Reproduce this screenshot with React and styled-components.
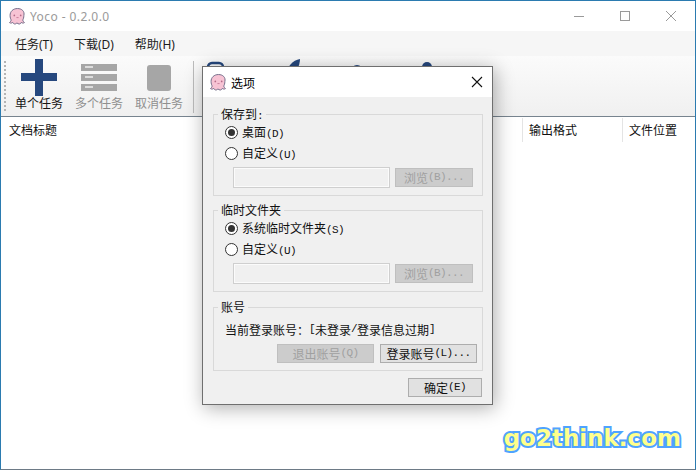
import React from "react";
import styled, { createGlobalStyle } from "styled-components";

const GlobalStyle = createGlobalStyle`
  html, body {
    margin: 0;
    padding: 0;
    background: #fff;
  }
  * {
    box-sizing: border-box;
  }
`;

const uiFont = `"Noto Sans", "Noto Sans CJK SC", sans-serif`;
const cjkFont = `"Noto Sans CJK SC", sans-serif`;

const AppWindow = styled.div`
  position: relative;
  width: 696px;
  height: 470px;
  overflow: hidden;
  display: flex;
  flex-direction: column;
  background: #fff;
  border: 1px solid #2b7bb0;
  border-bottom-color: #6d7a86;
  font-family: ${cjkFont};
  font-size: 12px;
  color: #111;
`;

const TitleBar = styled.div`
  height: 30px;
  flex: none;
  display: flex;
  align-items: center;
  padding-left: 8px;
  background: #fff;
`;

const TitleText = styled.span`
  margin-left: 4px;
  font-family: ${uiFont};
  font-size: 12px;
  letter-spacing: 0.42px;
  color: #9a9a9a;
`;

const WinButtons = styled.div`
  margin-left: auto;
  display: flex;
  height: 100%;
`;

const WinButton = styled.div`
  width: 46px;
  height: 100%;
  display: flex;
  align-items: center;
  justify-content: center;
  padding-right: 2px;
`;

const MenuBar = styled.div`
  height: 25px;
  flex: none;
  display: flex;
  align-items: center;
  gap: 21px;
  padding-left: 14px;
  background: #f6f6f6;
  font-family: ${uiFont};
  font-size: 12px;
  color: #1c1c1c;
`;

const Toolbar = styled.div`
  height: 60px;
  flex: none;
  display: flex;
  padding: 3px 0 0 3px;
  background: linear-gradient(#fbfbfb, #f0f0f0);
`;

const Grip = styled.div`
  width: 2px;
  height: 52px;
  margin-top: 2px;
  margin-right: 3px;
  background: repeating-linear-gradient(#b4b4b4 0 2px, transparent 2px 4px);
`;

const ToolButton = styled.div`
  width: ${(p) => p.$width || 60}px;
  display: flex;
  flex-direction: column;
  align-items: center;
  font-size: 12px;
  line-height: 14px;
  color: ${(p) => (p.$disabled ? "#8f8f8f" : "#151515")};
`;

const ToolIcon = styled.div`
  height: 37px;
  display: flex;
  align-items: center;
  justify-content: center;
`;

const ToolSeparator = styled.div`
  width: 1px;
  height: 52px;
  margin: 2px 7px 0 4px;
  background: #bcbcbc;
`;

const Table = styled.div`
  flex: 1;
  background: #fff;
  border-top: 1px solid #77848f;
`;

const HeaderRow = styled.div`
  height: 26px;
  display: flex;
  align-items: center;
`;

const HeaderCell = styled.div`
  height: 24px;
  display: flex;
  align-items: center;
  width: ${(p) => p.$width}px;
  padding-left: ${(p) => (p.$first ? 8 : 6)}px;
  padding-bottom: 2px;
  border-left: ${(p) => (p.$first ? "none" : "1px solid #e4e4e4")};
`;

const Dialog = styled.div`
  position: absolute;
  left: 201px;
  top: 65px;
  width: 291px;
  height: 339px;
  display: flex;
  flex-direction: column;
  background: #f0f0f0;
  border: 1px solid #6f6f6f;
  box-shadow: 2px 3px 18px rgba(0, 0, 0, 0.32);
`;

const DialogTitle = styled.div`
  height: 30px;
  flex: none;
  display: flex;
  align-items: center;
  padding: 0 9px 0 7px;
  background: #fff;
  font-size: 12px;
  color: #000;
`;

const DialogName = styled.span`
  margin-left: 4px;
`;

const CloseBox = styled.div`
  margin-left: auto;
  display: flex;
`;

const DialogBody = styled.div`
  flex: 1;
  display: flex;
  flex-direction: column;
  padding: 10px 9px 0 10px;
`;

const Group = styled.fieldset`
  margin: 0 0 ${(p) => p.$gap || 0}px;
  padding: 1px 9px 0 11px;
  height: ${(p) => p.$height}px;
  border: 1px solid #d9d9d9;
  min-width: 0;
`;

const GroupLegend = styled.legend`
  margin-left: -7px;
  padding: 0 3px;
  height: 14px;
  font-size: 12px;
  line-height: 14px;
  color: #111;
`;

const RadioRow = styled.label`
  display: flex;
  align-items: center;
  height: 21px;
  gap: 4px;
  font-size: 12px;
  line-height: 14px;
  color: #111;
`;

const RadioMark = styled.span`
  width: 13px;
  height: 13px;
  flex: none;
  display: flex;
  align-items: center;
  justify-content: center;
  border-radius: 50%;
  background: #fff;
  border: 1px solid #333;

  &::after {
    content: "";
    display: ${(p) => (p.$checked ? "block" : "none")};
    width: 7px;
    height: 7px;
    border-radius: 50%;
    background: #333;
  }
`;

const Key = styled.span`
  font-family: "Liberation Mono", monospace;
  font-size: 11px;
  line-height: 1;
  letter-spacing: -0.6px;
`;

const PathRow = styled.div`
  display: flex;
  align-items: center;
  gap: 5px;
  margin: 3px 0 0 8px;
`;

const PathInput = styled.div`
  width: 157px;
  height: 21px;
  background: #f0f0f0;
  border: 1px solid #cfcfcf;
  box-shadow: inset 0 0 0 1px #fbfbfb;
`;

const PushButton = styled.div`
  width: ${(p) => p.$width}px;
  height: 19px;
  display: flex;
  align-items: center;
  justify-content: center;
  font-size: 12px;
  white-space: nowrap;
  background: ${(p) => (p.$disabled ? "#cccccc" : "#e1e1e1")};
  border: 1px solid ${(p) => (p.$disabled ? "#bfbfbf" : "#adadad")};
  color: ${(p) => (p.$disabled ? "#a0a0a0" : "#111")};
`;

const AccountLine = styled.div`
  height: 14px;
  margin-top: 7px;
  display: flex;
  align-items: center;
  font-size: 12px;
  color: #111;
  white-space: nowrap;
`;

const AccountButtons = styled.div`
  display: flex;
  justify-content: flex-end;
  gap: 6px;
  margin: 8px -4px 0 0;
`;

const DialogFooter = styled.div`
  display: flex;
  justify-content: flex-end;
  margin: 7px 1px 0 0;
`;

const Watermark = styled.div`
  position: absolute;
  right: 14px;
  bottom: 16px;
  font-family: "DejaVu Sans", sans-serif;
  font-weight: 700;
  font-size: 23px;
  line-height: 30px;
  color: #ffff8c;
  -webkit-text-stroke: 4px #4fa3ff;
  paint-order: stroke fill;
`;

const Octopus = () => (
  <svg width="17" height="17" viewBox="1 0.5 16 16">
    <path
      d="M9 1C4.8 1 2 3.8 2 7.500c0 2 .6 3.400 1.100 4.400-.4 1.100-1 1.800-1.600 2.400.9.600 2.200.500 3-.2.500 1 1.500 1.700 2.500 1.400.6-.2.900-.5 1.500-1 .6.500 1.200 1.200 2.200 1.100 1-.1 1.400-.7 1.800-1.500.8.700 2.200.800 3 .2-.6-.6-1.200-1.300-1.600-2.400.5-1 1.100-2.400 1.100-4.400C15.900 3.800 13.200 1 9 1z"
      fill="#f7c3d4"
      stroke="#6f6a86"
      strokeWidth="0.9"
    />
    <circle cx="6" cy="7.500" r="0.800" fill="#b56a88" />
    <circle cx="12" cy="7.500" r="0.800" fill="#b56a88" />
    <path d="M8 9.500h2" stroke="#c97f9c" strokeWidth="0.9" />
  </svg>
);

const PlusIcon = () => (
  <svg width="36" height="37" viewBox="0 0 36 37">
    <path d="M14 0h8v14h14v8H22v15h-8V22H0v-8h14z" fill="#26487e" />
  </svg>
);

const ListIcon = () => (
  <svg width="36" height="28" viewBox="0 0 36 28">
    {[0, 10, 20].map((y) => (
      <g key={y}>
        <rect y={y} width="36" height="7" fill="#a6a6a6" />
        <rect x="4" y={y + 2} width="8" height="2" fill="#dcdcdc" />
      </g>
    ))}
  </svg>
);

const StopIcon = () => (
  <svg width="24" height="26" viewBox="0 0 24 26">
    <rect width="24" height="26" rx="3" fill="#a6a6a6" />
  </svg>
);

const BoxIcon = () => (
  <svg width="40" height="37" viewBox="0 0 40 37">
    <rect x="7" y="4" width="15" height="30" rx="4" fill="none" stroke="#26487e" strokeWidth="2.500" />
  </svg>
);

const FeatherIcon = () => (
  <svg width="40" height="37" viewBox="0 0 40 37">
    <path d="M24 0c-7 1-14 8-15 18l5 1C20 14 24 7 24 0z" fill="#26487e" />
  </svg>
);

const DotIcon = ({ x, y, r }) => (
  <svg width="40" height="37" viewBox="0 0 40 37">
    <circle cx={x} cy={y} r={r} fill="#26487e" />
  </svg>
);

const Radio = ({ checked, children }) => (
  <RadioRow>
    <RadioMark $checked={checked} />
    <span>{children}</span>
  </RadioRow>
);

const FolderGroup = ({ title, height, mainLabel, gap }) => (
  <Group $height={height} $gap={gap}>
    <GroupLegend>{title}</GroupLegend>
    <Radio checked>{mainLabel}</Radio>
    <Radio>
      自定义<Key>(U)</Key>
    </Radio>
    <PathRow>
      <PathInput />
      <PushButton $disabled $width={78}>
        浏览<Key>(B)...</Key>
      </PushButton>
    </PathRow>
  </Group>
);

const App = () => (
  <>
    <GlobalStyle />
    <AppWindow>
      <TitleBar>
        <Octopus />
        <TitleText>Yoco - 0.2.0.0</TitleText>
        <WinButtons>
          <WinButton>
            <svg width="10" height="10" viewBox="0 0 10 10">
              <path d="M0 5.500h10" stroke="#9a9a9a" />
            </svg>
          </WinButton>
          <WinButton>
            <svg width="10" height="10" viewBox="0 0 10 10">
              <rect x="0.500" y="0.500" width="9" height="9" fill="none" stroke="#9a9a9a" />
            </svg>
          </WinButton>
          <WinButton>
            <svg width="10" height="10" viewBox="0 0 10 10">
              <path d="M0 0l10 10M10 0L0 10" stroke="#9a9a9a" />
            </svg>
          </WinButton>
        </WinButtons>
      </TitleBar>

      <MenuBar>
        <span>任务(T)</span>
        <span>下载(D)</span>
        <span>帮助(H)</span>
      </MenuBar>

      <Toolbar>
        <Grip />
        <ToolButton>
          <ToolIcon>
            <PlusIcon />
          </ToolIcon>
          单个任务
        </ToolButton>
        <ToolButton $disabled>
          <ToolIcon>
            <ListIcon />
          </ToolIcon>
          多个任务
        </ToolButton>
        <ToolButton $disabled>
          <ToolIcon>
            <StopIcon />
          </ToolIcon>
          取消任务
        </ToolButton>
        <ToolSeparator />
        <ToolButton $width={40}>
          <ToolIcon>
            <BoxIcon />
          </ToolIcon>
        </ToolButton>
        <ToolButton $width={110}>
          <ToolIcon>
            <FeatherIcon />
          </ToolIcon>
        </ToolButton>
        <ToolButton $width={40}>
          <ToolIcon>
            <DotIcon x={6} y={12} r={6} />
          </ToolIcon>
        </ToolButton>
        <ToolButton $width={60}>
          <ToolIcon>
            <DotIcon x={26} y={8} r={5} />
          </ToolIcon>
        </ToolButton>
      </Toolbar>

      <Table>
        <HeaderRow>
          <HeaderCell $first $width={521}>
            文档标题
          </HeaderCell>
          <HeaderCell $width={100}>输出格式</HeaderCell>
          <HeaderCell $width={72}>文件位置</HeaderCell>
        </HeaderRow>
      </Table>

      <Dialog>
        <DialogTitle>
          <Octopus />
          <DialogName>选项</DialogName>
          <CloseBox>
            <svg width="12" height="12" viewBox="0 0 12 12">
              <path d="M1 1l10 10M11 1L1 11" stroke="#111" strokeWidth="1.100" />
            </svg>
          </CloseBox>
        </DialogTitle>
        <DialogBody>
          <FolderGroup
            title={
              <>
                保存到<Key>:</Key>
              </>
            }
            height={89}
            gap={7}
            mainLabel={
              <>
                桌面<Key>(D)</Key>
              </>
            }
          />
          <FolderGroup
            title="临时文件夹"
            height={89}
            gap={8}
            mainLabel={
              <>
                系统临时文件夹<Key>(S)</Key>
              </>
            }
          />
          <Group $height={71}>
            <GroupLegend>账号</GroupLegend>
            <AccountLine>
              当前登录账号：<Key>[</Key>未登录<Key>/</Key>登录信息过期<Key>]</Key>
            </AccountLine>
            <AccountButtons>
              <PushButton $disabled $width={97}>
                退出账号<Key>(Q)</Key>
              </PushButton>
              <PushButton $width={97}>
                登录账号<Key>(L)...</Key>
              </PushButton>
            </AccountButtons>
          </Group>
          <DialogFooter>
            <PushButton $width={74}>
              确定<Key>(E)</Key>
            </PushButton>
          </DialogFooter>
        </DialogBody>
      </Dialog>

      <Watermark>go2think.com</Watermark>
    </AppWindow>
  </>
);

export default App;
